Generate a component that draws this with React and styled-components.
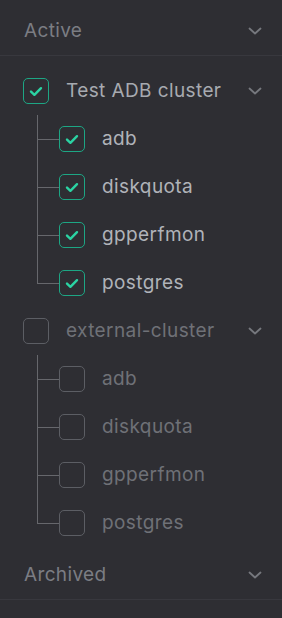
import styled, { createGlobalStyle } from "styled-components"

const GlobalStyle = createGlobalStyle`
  html, body {
    margin: 0;
    padding: 0;
    background: #2e2e33;
  }
  body {
    font-family: Inter, "Noto Sans", sans-serif;
  }
`

const clusters = [
  { name: "Test ADB cluster", checked: true, dbs: ["adb", "diskquota", "gpperfmon", "postgres"] },
  { name: "external-cluster", checked: false, dbs: ["adb", "diskquota", "gpperfmon", "postgres"] },
]

function Chevron() {
  return (
    <St.Chevron width="14" height="8" viewBox="0 0 14 8" fill="none">
      <path d="M1.5 1.5L7 6.5L12.5 1.5" stroke="currentColor" strokeWidth="1.8" strokeLinecap="round" strokeLinejoin="round" />
    </St.Chevron>
  )
}

function Checkbox({ checked }) {
  return (
    <St.Box $checked={checked}>
      {checked && (
        <svg width="14" height="11" viewBox="0 0 14 11" fill="none">
          <path d="M2 5.6L5.4 8.8L12 2.2" stroke="#2bd3a3" strokeWidth="2.4" strokeLinecap="round" strokeLinejoin="round" />
        </svg>
      )}
    </St.Box>
  )
}

export default function App() {
  return (
    <St.Panel>
      <GlobalStyle />
      <St.SectionHeader>
        <St.SectionTitle>Active</St.SectionTitle>
        <Chevron />
      </St.SectionHeader>

      <St.Tree>
        {clusters.map((c) => (
          <div key={c.name}>
            <St.ClusterRow>
              <Checkbox checked={c.checked} />
              <St.ClusterName $checked={c.checked}>{c.name}</St.ClusterName>
              <Chevron />
            </St.ClusterRow>
            <St.DbList>
              {c.dbs.map((db, i) => (
                <St.DbRow key={db} $last={i === c.dbs.length - 1}>
                  <Checkbox checked={c.checked} />
                  <St.DbName $checked={c.checked}>{db}</St.DbName>
                </St.DbRow>
              ))}
            </St.DbList>
          </div>
        ))}
      </St.Tree>

      <St.SectionHeader>
        <St.SectionTitle>Archived</St.SectionTitle>
        <Chevron />
      </St.SectionHeader>
    </St.Panel>
  )
}

const St = {
  Panel: styled.div`
    width: 282px;
    min-height: 618px;
    padding-top: 7px;
    box-sizing: border-box;
    background: #2e2e33;
  `,
  SectionHeader: styled.div`
    display: flex;
    align-items: center;
    justify-content: space-between;
    height: 48px;
    padding: 0 20px 0 24px;
    border-bottom: 1px solid #38383e;
  `,
  SectionTitle: styled.div`
    font-size: 19px;
    letter-spacing: 0.35px;
    line-height: 22px;
    color: #7b7d83;
  `,
  Chevron: styled.svg`
    color: #76787e;
    display: block;
  `,
  Tree: styled.div`
    padding: 11px 0 4px 23px;
  `,
  ClusterRow: styled.div`
    display: flex;
    align-items: center;
    height: 48px;
    padding-right: 20px;
  `,
  ClusterName: styled.div`
    flex: 1;
    margin-left: 17px;
    font-size: 19px;
    letter-spacing: 0.4px;
    line-height: 22px;
    color: ${(p) => (p.$checked ? "#a7aab0" : "#6f7177")};
  `,
  Box: styled.div`
    width: 26px;
    height: 26px;
    box-sizing: border-box;
    border-radius: 5px;
    border: 1.5px solid ${(p) => (p.$checked ? "#1da684" : "#5c5e64")};
    display: flex;
    align-items: center;
    justify-content: center;
    flex-shrink: 0;
  `,
  DbList: styled.div`
    margin-left: 14px;
  `,
  DbRow: styled.div`
    position: relative;
    display: flex;
    align-items: center;
    height: 48px;
    padding-left: 22px;

    &::before {
      content: "";
      position: absolute;
      left: 0;
      top: 0;
      width: 1px;
      height: ${(p) => (p.$last ? "50%" : "100%")};
      background: #66676c;
    }
    &::after {
      content: "";
      position: absolute;
      left: 0;
      top: 50%;
      width: 22px;
      height: 1px;
      background: #66676c;
    }
  `,
  DbName: styled.div`
    margin-left: 17px;
    font-size: 19px;
    letter-spacing: 0.4px;
    line-height: 22px;
    color: ${(p) => (p.$checked ? "#b0b3b9" : "#6f7177")};
  `,
}
